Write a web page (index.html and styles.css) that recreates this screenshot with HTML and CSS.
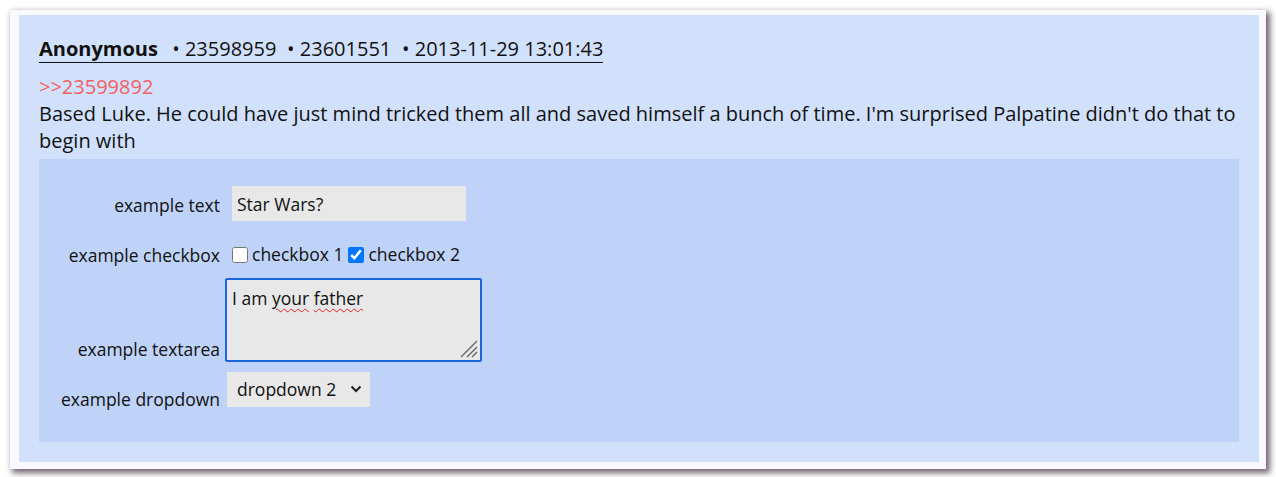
FILE: index.html
```html
<!DOCTYPE html>
<html lang="en">
<head>
<meta charset="utf-8">
<title>Post</title>
<link rel="stylesheet" href="styles.css">
</head>
<body>
<div class="frame">
  <div class="post">
    <div class="post-header">
      <span class="name">Anonymous</span>
      <span class="meta">&bull; 23598959</span>
      <span class="meta">&bull; 23601551</span>
      <span class="meta">&bull; 2013-11-29 13:01:43</span>
    </div>
    <div class="quote-link">&gt;&gt;23599892</div>
    <div class="post-body">Based Luke. He could have just mind tricked them all and saved himself a bunch of time. I'm surprised Palpatine didn't do that to begin with</div>
    <form class="form">
      <div class="row row-text">
        <label class="label" for="t1">example text</label>
        <input class="text-input" id="t1" type="text" value="Star Wars?">
      </div>
      <div class="row row-check">
        <span class="label">example checkbox</span>
        <span class="checks">
          <label class="check"><input type="checkbox">checkbox 1</label>
          <label class="check"><input type="checkbox" checked>checkbox 2</label>
        </span>
      </div>
      <div class="row row-area">
        <label class="label" for="ta">example textarea</label>
        <span class="area-wrap">
          <textarea class="textarea" id="ta" spellcheck="true">I am your father</textarea>
          <span class="spell" aria-hidden="true">I am <span class="misspelled">your</span> <span class="misspelled">father</span></span>
          <svg class="grip" width="18" height="18" viewBox="0 0 18 18" aria-hidden="true">
            <path d="M1 17 L17 1 M7 17 L17 7 M12 17 L17 12" stroke="#666" stroke-width="1.4" fill="none"/>
          </svg>
        </span>
      </div>
      <div class="row row-select">
        <label class="label" for="sel">example dropdown</label>
        <span class="select-wrap">
          <select class="select" id="sel">
            <option>dropdown 1</option>
            <option selected>dropdown 2</option>
            <option>dropdown 3</option>
          </select>
          <svg class="chevron" width="12" height="8" viewBox="0 0 12 8" aria-hidden="true"><path d="M1.5 1.5 L6 6 L10.5 1.5" fill="none" stroke="#222" stroke-width="2"/></svg>
        </span>
      </div>
    </form>
  </div>
</div>
</body>
</html>
```

FILE: styles.css
```css
html, body {
  margin: 0;
  padding: 0;
  background: #ffffff;
}

body {
  font-family: "Open Sans", "Liberation Sans", sans-serif;
  font-size: 20px;
  line-height: 27px;
  color: #111111;
}

.frame {
  margin: 10px;
  width: 1240px;
  padding: 5px 7px 7px 9px;
  background: #f8faff;
  box-shadow: 3px 3px 6px 1px rgba(80, 60, 75, 0.8);
}

.post {
  background: #d1e1fc;
  padding: 20px;
}

.post-header {
  display: inline-block;
  border-bottom: 1px solid #111111;
  line-height: 27px;
}

.name {
  font-weight: 700;
  margin-right: 9px;
}

.meta {
  margin-right: 5.5px;
}

.meta:last-child {
  margin-right: 0;
}

.quote-link {
  margin-top: 10px;
  color: #f45f5f;
}

.form {
  margin-top: 5px;
  background: #bfd3f8;
  padding: 27px 0 35px;
  font-size: 17.5px;
}

.row {
  display: flex;
  align-items: flex-end;
}

.label {
  width: 181px;
  flex: none;
  text-align: right;
  line-height: 24px;
}

.row-text .label {
  padding-bottom: 4px;
}

.text-input {
  margin-left: 12px;
  width: 234px;
  height: 35px;
  box-sizing: border-box;
  border: none;
  background: #e8e8e8;
  font: inherit;
  color: #111111;
  padding: 0 5px;
  outline: none;
}

.row-check {
  margin-top: 20px;
  align-items: center;
}

.checks {
  margin-left: 11px;
  display: flex;
  align-items: center;
}

.check {
  display: inline-flex;
  align-items: center;
  margin-right: 4px;
}

.check input {
  margin: 0 4px 0 1px;
  width: 16px;
  height: 16px;
}

.row-area {
  margin-top: 10px;
}

.row-area .label {
  padding-bottom: 1px;
}

.area-wrap {
  position: relative;
  display: block;
  margin-left: 5px;
  height: 84px;
}

.textarea {
  display: block;
  width: 257px;
  height: 84px;
  box-sizing: border-box;
  border: 2px solid #1a66df;
  border-radius: 2px;
  background: #e8e8e8;
  font: inherit;
  line-height: 24px;
  color: #111111;
  padding: 6px 5px;
  margin: 0;
  outline: none;
  resize: none;
}

.spell {
  position: absolute;
  left: 7px;
  top: 8px;
  font: inherit;
  line-height: 24px;
  color: transparent;
  pointer-events: none;
  white-space: pre;
}

.misspelled {
  text-decoration: underline wavy #e02020;
  text-decoration-thickness: 1px;
  text-underline-offset: 3px;
}

.grip {
  position: absolute;
  right: 4px;
  bottom: 4px;
  pointer-events: none;
}

.row-select {
  margin-top: 10px;
}

.row-select .label {
  margin-bottom: -4px;
}

.select-wrap {
  position: relative;
  display: block;
  margin-left: 7px;
}

.select {
  display: block;
  appearance: none;
  -webkit-appearance: none;
  width: 143px;
  height: 35px;
  border: none;
  border-radius: 0;
  background: #e8e8e8;
  font: inherit;
  color: #111111;
  padding: 0 10px;
  margin: 0;
  outline: none;
}

.chevron {
  position: absolute;
  right: 8px;
  top: 13px;
  pointer-events: none;
}
```
